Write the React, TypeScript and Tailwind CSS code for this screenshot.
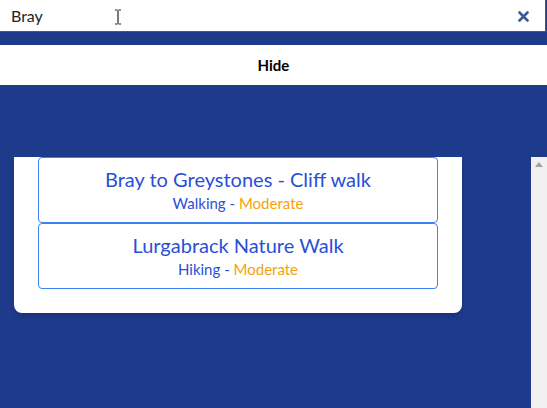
import React from "react";

const items = [
  { title: "Bray to Greystones - Cliff walk", type: "Walking", level: "Moderate" },
  { title: "Lurgabrack Nature Walk", type: "Hiking", level: "Moderate" },
];

export default function App() {
  return (
    <div
      className="w-[547px] h-[408px] bg-[#1e3a8a] overflow-hidden flex flex-col"
      style={{ fontFamily: "Lato, 'Noto Sans', sans-serif" }}
    >
      <div className="relative h-[32px] w-[546px] bg-white border-b border-r border-[#3d5a8c] flex items-center shrink-0">
        <span className="ml-[11px] text-[16px] text-[#222]">Bray</span>
        <svg className="absolute left-[114px] top-[9px]" width="8" height="16" viewBox="0 0 8 16">
          <path d="M1 1h2.5M4.5 1H7M4 1.5v13M1 15h2.5M4.5 15H7" stroke="#222" strokeWidth="1.2" fill="none" />
        </svg>
        <svg className="absolute left-[518px] top-[11px]" width="11" height="11" viewBox="0 0 11 11">
          <path d="M1.5 1.5l8 8M9.5 1.5l-8 8" stroke="#3b5a9a" strokeWidth="2.6" strokeLinecap="round" />
        </svg>
      </div>
      <div className="mt-[13px] h-[40px] bg-white flex items-center justify-center shrink-0">
        <span className="text-[15px] font-bold text-black">Hide</span>
      </div>
      <div className="h-[72px] shrink-0" />
      <div className="flex flex-1">
        <div className="ml-[14px] w-[448px]">
          <div className="bg-white rounded-b-lg shadow-md px-[24px] pb-[24px]">
            {items.map((it, i) => (
              <div
                key={i}
                className="h-[66px] w-[400px] border border-[#3b82f6] rounded-[4px] flex flex-col items-center justify-center"
              >
                <div className="text-[20px] leading-[24px] text-[#2a4fd6]">{it.title}</div>
                <div className="text-[15px] leading-[20px] mt-[2px]">
                  <span className="text-[#2a4fd6]">{it.type} - </span>
                  <span className="text-[#f5a20a]">{it.level}</span>
                </div>
              </div>
            ))}
          </div>
        </div>
        <div className="ml-auto w-[16px] bg-[#f1f1f1] flex justify-center pt-[5px]">
          <svg width="8" height="5" viewBox="0 0 8 5">
            <path d="M4 0L8 5H0z" fill="#a3a3a3" />
          </svg>
        </div>
      </div>
    </div>
  );
}
